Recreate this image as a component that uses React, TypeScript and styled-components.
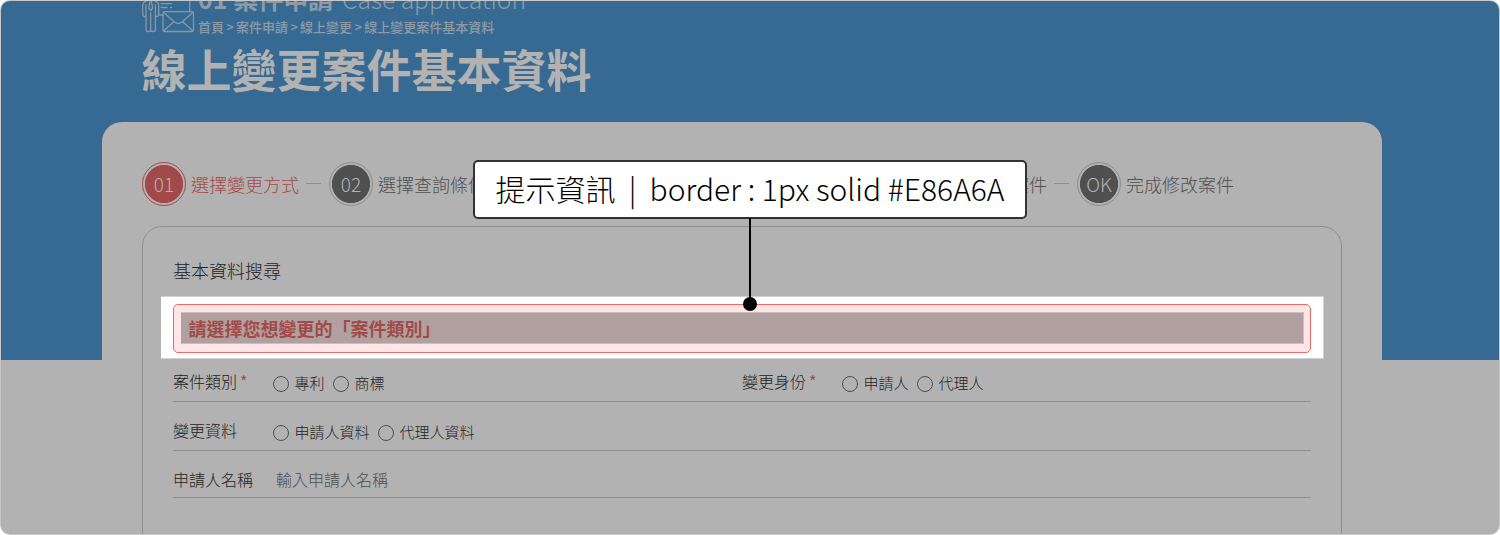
import React from "react";
import styled, { createGlobalStyle } from "styled-components";

const GlobalStyle = createGlobalStyle`
  *, *::before, *::after { box-sizing: border-box; }
  body {
    margin: 0;
    background: #fff;
    font-family: "Noto Sans CJK TC", "Noto Sans", sans-serif;
  }
`;

const Frame = styled.div`
  position: relative;
  width: 1500px;
  height: 535px;
  overflow: hidden;
  border: 1px solid #c8c8c8;
  border-radius: 10px;
  background: linear-gradient(#366a92 359px, #b2b2b2 359px);
`;

const Page = styled.div`
  width: 1280px;
  margin-left: 101px;
`;

const Header = styled.header`
  height: 121px;
  padding-left: 40px;
`;

const HeaderTop = styled.div`
  display: flex;
  gap: 2px;
  height: 35px;
`;

const HeaderIcon = styled.svg`
  display: block;
  flex: none;
  width: 54px;
  height: 34px;
  fill: none;
  stroke: #8598a6;
  stroke-width: 1.3;
  stroke-linecap: round;
  stroke-linejoin: round;
`;

const Section = styled.div`
  display: flex;
  align-items: baseline;
  height: 26px;
  margin-top: -16px;
  line-height: 26px;
  white-space: pre;
  color: #8e9ba6;
`;

const SectionName = styled.span`
  width: 144px;
  font-size: 25px;
  font-weight: 700;
`;

const SectionEnglish = styled.span`
  font-size: 24.6px;
  font-weight: 300;
`;

const Breadcrumb = styled.nav`
  height: 18px;
  margin-top: 7px;
  line-height: 18px;
  font-size: 13px;
  font-weight: 500;
  word-spacing: -0.6px;
  color: #8e9ba6;
  white-space: pre;
`;

const Title = styled.h1`
  margin: 0 0 0 -0.5px;
  font-size: 45px;
  line-height: 66px;
  font-weight: 700;
  color: #b2b2b2;
`;

const Card = styled.main`
  height: 420px;
  padding: 40px 40px 0;
  border-radius: 20px 20px 0 0;
  background: #b2b2b2;
`;

const Steps = styled.ol`
  display: flex;
  height: 44px;
  margin: 0;
  padding: 0;
  list-style: none;
`;

const Step = styled.li<{ $active?: boolean; $offset?: number }>`
  display: flex;
  align-items: center;
  gap: 5px;
  flex: 0 0 187px;
  margin-left: ${(p) => p.$offset ?? 0}px;
  font-size: 18px;
  font-weight: 300;
  line-height: 26px;
  white-space: nowrap;
  color: ${(p) => (p.$active ? "#a24a4a" : "#505050")};
`;

const StepNumber = styled.span<{ $active?: boolean }>`
  display: flex;
  align-items: center;
  justify-content: center;
  width: 44px;
  height: 44px;
  border: 1px solid ${(p) => (p.$active ? "#a24a4a" : "#8e8e8e")};
  border-radius: 50%;
  background: radial-gradient(
    circle,
    ${(p) => (p.$active ? "#a24a4a" : "#505050")} 18.7px,
    #b2b2b2 19.4px
  );
  color: #b2b2b2;
  font-size: 19px;
  font-weight: 300;
`;

const StepDash = styled.span`
  width: 15px;
  height: 1px;
  margin: -1px 0 0 2px;
  background: #8e8e8e;
`;

const Panel = styled.section`
  height: 360px;
  margin-top: 20px;
  padding: 30px 30px 0;
  border: 1px solid #8e8e8e;
  border-radius: 20px;
`;

const PanelTitle = styled.h2`
  height: 39px;
  margin: 0;
  font-size: 18px;
  line-height: 26px;
  font-weight: 300;
  color: #232323;
`;

const Spotlight = styled.div`
  height: 63px;
  margin: 0 -13px 0 -12px;
  padding: 7px 12px 5px;
  border: solid #d0d0d0;
  border-width: 1px 1px 1px 0;
  background: #fff;
`;

const Alert = styled.div`
  height: 49px;
  padding: 7px 6px 8px 7px;
  border: 1px solid #e86a6a;
  border-radius: 5px;
  background: #ffe6e6;
`;

const AlertText = styled.p`
  height: 32px;
  margin: 0;
  padding-left: 7.5px;
  border: solid #cebcbb;
  border-width: 1px 1px 1px 0;
  font-size: 18px;
  line-height: 31px;
  font-weight: 700;
  color: #a24a4a;
  background: #b0a1a0;
`;

const FormRow = styled.div<{ $height: number; $bottom?: number }>`
  display: grid;
  grid-template-columns: 569px 569px;
  align-items: end;
  height: ${(p) => p.$height}px;
  padding-bottom: ${(p) => p.$bottom ?? 5}px;
  border-bottom: 1px solid #8e8e8e;
`;

const Field = styled.div`
  display: flex;
  height: 28px;
  color: #232323;
`;

const Label = styled.span`
  flex: none;
  width: 100px;
  font-size: 16px;
  font-weight: 300;
  line-height: 26px;
`;

const Required = styled.span`
  margin-left: 3px;
  font-weight: 400;
  color: #a24a4a;
`;

const Options = styled.div`
  display: flex;
  gap: 8.5px;
  height: 28px;
`;

const Option = styled.label`
  display: flex;
  align-items: center;
  gap: 5.5px;
  font-size: 15px;
  font-weight: 300;
  line-height: 27px;
`;

const Radio = styled.span`
  width: 16px;
  height: 16px;
  margin-top: 3px;
  border: 1px solid #505050;
  border-radius: 50%;
`;

const Placeholder = styled.span`
  padding-left: 3px;
  font-size: 16px;
  font-weight: 300;
  line-height: 26px;
  color: #505050;
`;

const Callout = styled.div`
  position: absolute;
  top: 159px;
  left: 472px;
  width: 554px;
  height: 59px;
  border: 2px solid #323232;
  border-radius: 5px;
  background: #fff;
  font-size: 30px;
  line-height: 53px;
  font-weight: 300;
  text-align: center;
  white-space: pre;
  color: #000;

  &::before {
    content: "";
    position: absolute;
    top: 56px;
    left: 274px;
    width: 2px;
    height: 86px;
    background: #000;
  }

  &::after {
    content: "";
    position: absolute;
    top: 135px;
    left: 268px;
    width: 14px;
    height: 14px;
    border-radius: 50%;
    background: #000;
  }
`;

const steps = [
  { number: "01", text: "選擇變更方式", active: true },
  { number: "02", text: "選擇查詢條件" },
  { number: "05", text: "確認修改案件", offset: 374 },
  { number: "OK", text: "完成修改案件" },
];

function RadioField({ label, required, options }: { label: string; required?: boolean; options: string[] }) {
  return (
    <Field>
      <Label>
        {label}
        {required && <Required>*</Required>}
      </Label>
      <Options>
        {options.map((o) => (
          <Option key={o}>
            <Radio />
            {o}
          </Option>
        ))}
      </Options>
    </Field>
  );
}

export default function App() {
  return (
    <>
      <GlobalStyle />
      <Frame>
        <Page>
          <Header>
            <HeaderTop>
              <HeaderIcon viewBox="0 0 54 34">
                <path d="M4.500 0 Q0.700 1 0.700 4.500 V14 Q2 16.500 4 15 V28.500 Q4 30.500 6 30.500 H7 Q8.700 30.500 8.700 29 V12 M8.700 29 Q8.700 30.500 10.400 30.500 H11.400 Q13.400 30.500 13.400 28.500 V15 Q15.500 16.500 16.700 14 V4.500 Q16.700 1 13 0" />
                <path d="M4 4 V15 M13.400 4 V15 M8 0 L6.800 7 L8.700 9.500 L10.600 7 L9.400 0 M16.700 14 H21" />
                <path d="M19 2.700 H29.500 M19 6.500 H25 M28.500 6.500 H29.500 M47.700 0 V10.500" />
                <rect x="21" y="10.700" width="30.500" height="19.800" rx="1.500" />
                <path d="M22 11.700 L32.500 21 Q36.300 24 40 21 L50.500 11.700 M22 29.500 L31.800 20.700 M50.500 29.500 L40.700 20.700" />
              </HeaderIcon>
              <div>
                <Section>
                  <SectionName>01 案件申請</SectionName>
                  <SectionEnglish>Case application</SectionEnglish>
                </Section>
                <Breadcrumb>{"首頁 > 案件申請 > 線上變更 > 線上變更案件基本資料"}</Breadcrumb>
              </div>
            </HeaderTop>
            <Title>線上變更案件基本資料</Title>
          </Header>
          <Card>
            <Steps>
              {steps.map((s, i) => (
                <Step key={s.number} $active={s.active} $offset={s.offset}>
                  <StepNumber $active={s.active}>{s.number}</StepNumber>
                  {s.text}
                  {i < steps.length - 1 && <StepDash />}
                </Step>
              ))}
            </Steps>
            <Panel>
              <PanelTitle>基本資料搜尋</PanelTitle>
              <Spotlight>
                <Alert>
                  <AlertText>請選擇您想變更的「案件類別」</AlertText>
                </Alert>
              </Spotlight>
              <FormRow $height={43}>
                <RadioField label="案件類別" required options={["專利", "商標"]} />
                <RadioField label="變更身份" required options={["申請人", "代理人"]} />
              </FormRow>
              <FormRow $height={49}>
                <RadioField label="變更資料" options={["申請人資料", "代理人資料"]} />
              </FormRow>
              <FormRow $height={47} $bottom={3}>
                <Field>
                  <Label>申請人名稱</Label>
                  <Placeholder>輸入申請人名稱</Placeholder>
                </Field>
              </FormRow>
            </Panel>
          </Card>
        </Page>
        <Callout>{"提示資訊  |  border : 1px solid #E86A6A"}</Callout>
      </Frame>
    </>
  );
}
